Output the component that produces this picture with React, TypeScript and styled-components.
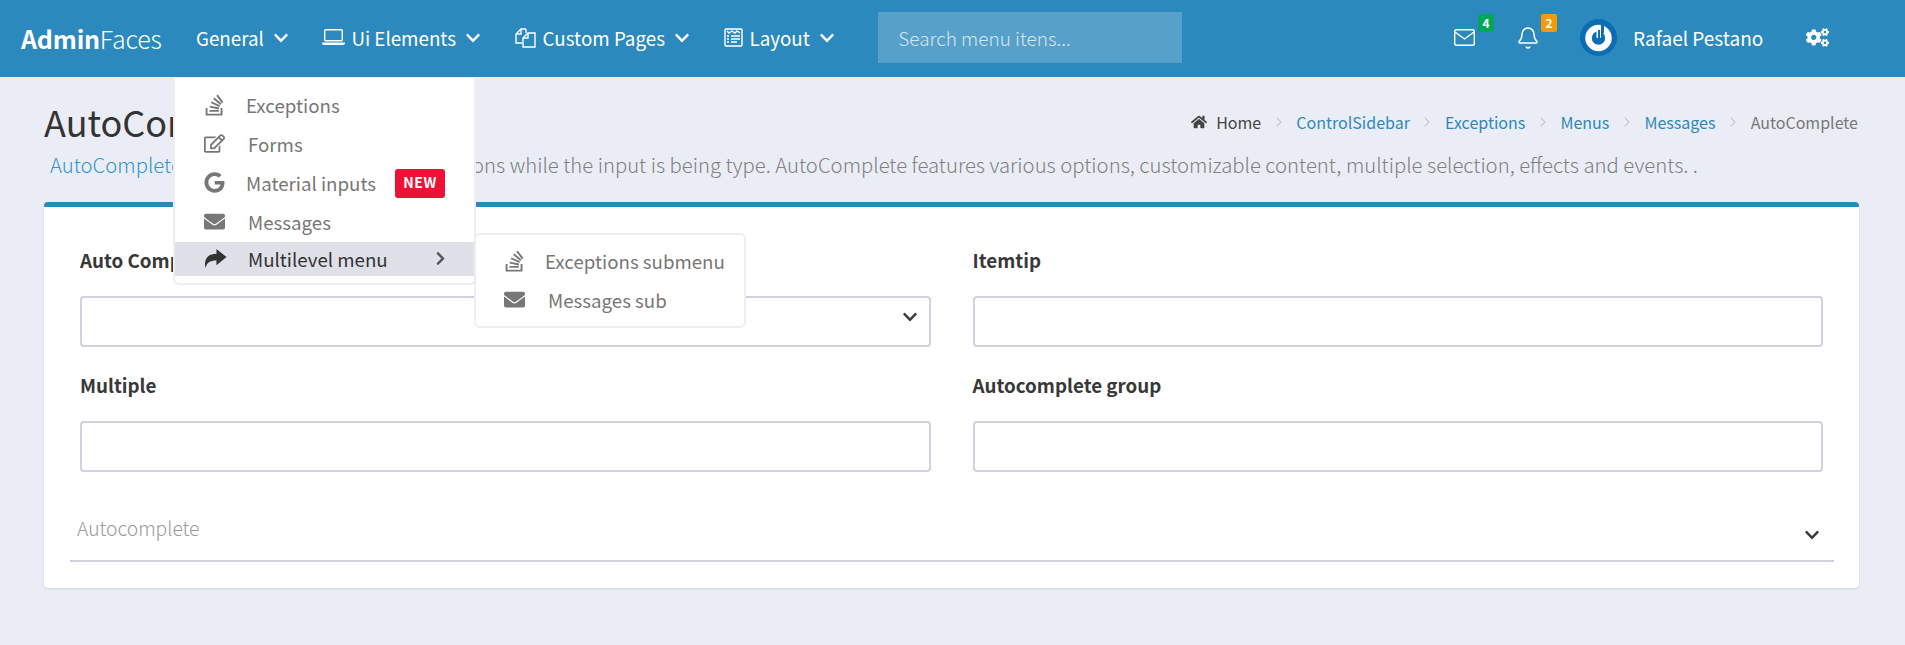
import React from "react";
import styled, { createGlobalStyle } from "styled-components";
import { FaStackOverflow, FaRegEdit, FaGoogle, FaEnvelope, FaHome, FaCogs, FaChevronDown, FaChevronRight } from "react-icons/fa";
import { Bell, ChevronRight } from "lucide-react";

const Global = createGlobalStyle`
  html, body { margin: 0; padding: 0; background: #eaedf5; }
  body { font-family: "Noto Sans CJK SC", "Noto Sans", sans-serif; color: #333; height: 645px; overflow: hidden; }
  * { box-sizing: border-box; }
`;

const Navbar = styled.header`
  position: relative; height: 77px; background: #2c89bd; color: #fff;
  display: flex; align-items: center; padding: 0 0 2px 21px;
`;
const Brand = styled.div`
  font-size: 25px; line-height: 30px; width: 175px; font-weight: 300; letter-spacing: -0.2px;
  b { font-weight: 700; }
`;
const NavItem = styled.div<{ $gap: number }>`
  display: flex; align-items: center; height: 75px; font-size: 18.8px; margin-right: ${p => p.$gap}px;
  svg.chev { font-size: 16px; margin-left: 9px; }
`;
const NavLead = styled.svg`
  margin-right: 6.5px; fill: none; stroke: #fff; stroke-width: 1.4; flex: none;
`;
const Search = styled.div`
  width: 304px; height: 51px; background: rgba(255,255,255,.2);
  display: flex; align-items: center; padding-left: 20px; font-size: 19px; font-weight: 300; color: #d5e7f1;
`;
const NavRight = styled.div`
  margin-left: auto; display: flex; align-items: center; padding-right: 76px; height: 75px;
`;
const IconLink = styled.div<{ $w: number }>`
  position: relative; width: ${p => p.$w}px; height: 22px; display: flex; align-items: center;
`;
const Badge = styled.i<{ $color: string; $left: number }>`
  position: absolute; left: ${p => p.$left}px; top: -13px; width: 16px; height: 18px; border-radius: 2px; background: ${p => p.$color};
  font: 700 12px/18px "Noto Sans CJK SC", sans-serif; text-align: center; color: #fff;
`;
const UserName = styled.div`
  font-size: 19px; width: 173px; margin-left: 16px; font-weight: 400;
`;
const Main = styled.main`
  padding: 0 46px 0 44px;
`;
const HeadRow = styled.div`
  display: flex; justify-content: space-between; align-items: flex-start; height: 68px; padding-top: 21px;
`;
const Title = styled.h1`
  margin: 0; font-size: 36px; line-height: 46px; font-weight: 400; color: #333;
`;
const Crumbs = styled.nav`
  display: flex; align-items: center; font-size: 16px; margin-top: 12px; color: #777; margin-right: 1px;
  a { color: #2c89bd; }
  svg.sep { color: #c8c8c8; margin: 0 9.6px; }
`;
const Home = styled.span`
  color: #444; display: flex; align-items: center; gap: 9px;
`;
const Sub = styled.p`
  margin: 0; padding: 5px 0 0 6px; height: 57px; font-size: 20.3px; line-height: 28px; font-weight: 300; color: #808080; white-space: nowrap;
  a { color: #2f95cf; }
`;
const Card = styled.section`
  background: #fff; border-top: 5px solid #2c89bd; border-radius: 4px; height: 386px;
  box-shadow: 0 1px 2px rgba(0,0,0,.12); padding: 41px 36px 0 26px;
`;
const Grid = styled.div`
  display: grid; grid-template-columns: 1fr 1fr; column-gap: 42px; row-gap: 26px; padding-left: 10px;
`;
const Field = styled.div`
  display: flex; flex-direction: column;
`;
const Label = styled.label`
  font-size: 18.8px; line-height: 24px; font-weight: 700; color: #383838; margin-bottom: 24px;
`;
const Input = styled.div`
  height: 51px; border: 2px solid #d0d3df; border-radius: 4px; background: #fff;
  display: flex; align-items: center; justify-content: flex-end; padding: 0 11px 10px 0; color: #3c3c3c; font-size: 16px;
`;
const Material = styled.div`
  margin-top: 26px; height: 64px; border-bottom: 2px solid #d0d3df; margin-right: -11px;
  display: flex; justify-content: space-between; padding: 16px 14px 0 7px;
  font-size: 19.3px; font-weight: 300; color: #999; line-height: 28px;
  svg { font-size: 16px; margin-top: 13px; color: #3c3c3c; }
`;
const Menu = styled.div`
  position: absolute; left: 173px; top: 78px; width: 303px; height: 207px; background: #fff;
  border: 2px solid #eceef2; border-top: 0; border-radius: 0 0 6px 6px; padding-top: 8px; z-index: 3;
`;
const SubMenu = styled.div`
  position: absolute; left: 0; top: -9px; margin-left: 299px; width: 272px; height: 95px; background: #fff;
  border: 2px solid #eceef2; border-radius: 6px; padding-top: 7px;
`;
const Row = styled.div<{ $active?: boolean; $pad?: number; $inset?: number }>`
  display: flex; align-items: center; position: relative; height: ${p => (p.$active ? 34 : 39)}px;
  padding: 0 0 2px ${p => p.$inset ?? 29}px; font-size: 18.7px; white-space: nowrap;
  background: ${p => (p.$active ? "#e0e1e8" : "transparent")}; color: ${p => (p.$active ? "#333" : "#777")};
  span { margin-left: ${p => p.$pad ?? 21}px; }
  svg.ic { font-size: 21px; width: 21px; flex: none; }
  svg.so { font-size: 24px; width: 21px; flex: none; }
`;
const RowChev = styled(FaChevronRight)`
  position: absolute; right: 26px; font-size: 15px; color: #555;
`;
const NewTag = styled.b`
  position: absolute; left: 220px; top: 5px; width: 50px; height: 29px; background: #ee1236; border-radius: 3px;
  color: #fff; font-size: 14px; font-weight: 700; line-height: 27px; text-align: center; letter-spacing: .5px;
`;
const ShareIcon = styled.svg`
  fill: #333; flex: none;
`;
const Avatar = () => (
  <svg width="37" height="37" viewBox="0 0 37 37" style={{ flex: "none" }}>
    <circle cx="18.5" cy="18.5" r="18.5" fill="#0b6eb3" />
    <circle cx="18.5" cy="19" r="10" fill="none" stroke="#fff" strokeWidth="6.5" />
    <rect x="20.5" y="5" width="3.5" height="9" fill="#0b6eb3" />
    <rect x="16.5" y="6" width="4.5" height="13" rx="1" fill="#fff" />
    <rect x="18" y="11" width="2" height="8" fill="#0b6eb3" />
  </svg>
);

export default function App() {
  return (
    <>
      <Global />
      <Navbar>
        <Brand><b>Admin</b>Faces</Brand>
        <NavItem $gap={33}>General<FaChevronDown className="chev" /></NavItem>
        <NavItem $gap={34}>
          <NavLead width="23" height="17" viewBox="0 0 23 17">
            <rect x="2.7" y=".7" width="17.6" height="11" rx="1" />
            <path d="M0 13.5H23V14Q23 16 21 16H2Q0 16 0 14Z" fill="#fff" stroke="none" />
          </NavLead>
          Ui Elements<FaChevronDown className="chev" />
        </NavItem>
        <NavItem $gap={34}>
          <NavLead width="21" height="20" viewBox="0 0 21 20">
            <path d="M11 1H6L1 6V15H7M6 1V6H1M11 1V5M13 5H20V19H8V10ZM13 5V10H8" />
          </NavLead>
          Custom Pages<FaChevronDown className="chev" />
        </NavItem>
        <NavItem $gap={43.5}>
          <NavLead width="19" height="19" viewBox="0 0 19 19">
            <rect x="1" y="1" width="17" height="17" rx="1" />
            <path d="M3 3l2 2 3-2 3 2 2-2 3 2M3 8h2M7 8h9M3 11h2M7 11h9M3 14h2M7 14h6" />
          </NavLead>
          Layout<FaChevronDown className="chev" />
        </NavItem>
        <Search>Search menu itens...</Search>
        <NavRight>
          <IconLink $w={62}>
            <NavLead width="21" height="17" viewBox="0 0 21 17">
              <rect x=".7" y=".7" width="19.6" height="15.6" rx="1.5" />
              <path d="M1 3L10.5 10L20 3" />
            </NavLead>
            <Badge $color="#00a65a" $left={24}>4</Badge>
          </IconLink>
          <IconLink $w={64}><Bell size={24} strokeWidth={1.5} /><Badge $color="#f59a00" $left={25}>2</Badge></IconLink>
          <Avatar />
          <UserName>Rafael Pestano</UserName>
          <FaCogs style={{ fontSize: 23 }} />
        </NavRight>
        <Menu>
          <Row><FaStackOverflow className="so" /><span>Exceptions</span></Row>
          <Row $pad={23}><FaRegEdit className="ic" /><span>Forms</span></Row>
          <Row><FaGoogle className="ic" /><span>Material inputs</span><NewTag>NEW</NewTag></Row>
          <Row $pad={23}><FaEnvelope className="ic" /><span>Messages</span></Row>
          <Row $active $pad={21}>
            <ShareIcon width="23" height="23" viewBox="0 0 24 24">
              <path d="M13 2l10.5 8.5L13 19v-5c-7 0-10 2-11.5 8C.5 18 0 7 13 7z" />
            </ShareIcon>
            <span>Multilevel menu</span><RowChev />
            <SubMenu>
              <Row $inset={28} $pad={20}><FaStackOverflow className="so" /><span>Exceptions submenu</span></Row>
              <Row $inset={28} $pad={23}><FaEnvelope className="ic" /><span>Messages sub</span></Row>
            </SubMenu>
          </Row>
        </Menu>
      </Navbar>
      <Main>
        <HeadRow>
          <Title>AutoComplete</Title>
          <Crumbs>
            <Home><FaHome />Home</Home><ChevronRight className="sep" size={16} strokeWidth={1.6} />
            <a>ControlSidebar</a><ChevronRight className="sep" size={16} strokeWidth={1.6} />
            <a>Exceptions</a><ChevronRight className="sep" size={16} strokeWidth={1.6} />
            <a>Menus</a><ChevronRight className="sep" size={16} strokeWidth={1.6} />
            <a>Messages</a><ChevronRight className="sep" size={16} strokeWidth={1.6} />
            AutoComplete
          </Crumbs>
        </HeadRow>
        <Sub><a>AutoComplete</a> is an input that returns suggestions while the input is being type. AutoComplete features various options, customizable content, multiple selection, effects and events. .</Sub>
        <Card>
          <Grid>
            <Field><Label>Auto Complete</Label><Input><FaChevronDown /></Input></Field>
            <Field><Label>Itemtip</Label><Input /></Field>
            <Field><Label>Multiple</Label><Input /></Field>
            <Field><Label>Autocomplete group</Label><Input /></Field>
          </Grid>
          <Material>Autocomplete<FaChevronDown /></Material>
        </Card>
      </Main>
    </>
  );
}
